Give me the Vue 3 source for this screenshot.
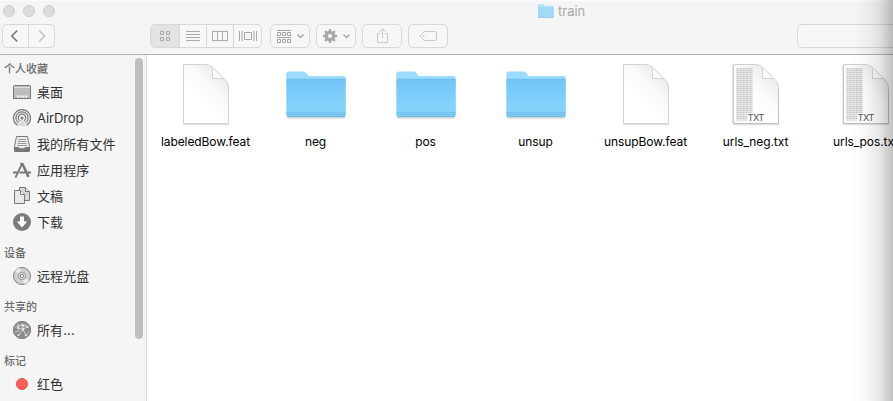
<script setup>
const groups = [
  {
    title: '个人收藏',
    items: [
      { label: '桌面', icon: 'desktop' },
      { label: 'AirDrop', icon: 'airdrop' },
      { label: '我的所有文件', icon: 'all' },
      { label: '应用程序', icon: 'apps' },
      { label: '文稿', icon: 'docs' },
      { label: '下载', icon: 'download' },
    ],
  },
  { title: '设备', items: [{ label: '远程光盘', icon: 'disc' }] },
  { title: '共享的', items: [{ label: '所有...', icon: 'globe' }] },
  { title: '标记', items: [{ label: '红色', icon: 'red' }] },
]

const files = [
  { name: 'labeledBow.feat', kind: 'file' },
  { name: 'neg', kind: 'folder' },
  { name: 'pos', kind: 'folder' },
  { name: 'unsup', kind: 'folder' },
  { name: 'unsupBow.feat', kind: 'file' },
  { name: 'urls_neg.txt', kind: 'txt' },
  { name: 'urls_pos.txt', kind: 'txt' },
]

const textLines = Array.from({ length: 26 }, (_, i) => i)
</script>

<template>
  <div class="window">
    <svg class="defs" width="0" height="0">
      <defs>
        <linearGradient id="folderFront" x1="0" y1="0" x2="0" y2="1">
          <stop offset="0" stop-color="#70c4f6" />
          <stop offset="0.8" stop-color="#86d4fb" />
          <stop offset="1" stop-color="#7acbf4" />
        </linearGradient>
        <linearGradient id="paper" x1="0.75" y1="0.1" x2="0.35" y2="0.6">
          <stop offset="0" stop-color="#ebebeb" />
          <stop offset="0.5" stop-color="#fafafa" />
          <stop offset="1" stop-color="#ffffff" />
        </linearGradient>
        <linearGradient id="curl" x1="0" y1="1" x2="0.6" y2="0.4">
          <stop offset="0" stop-color="#ffffff" />
          <stop offset="1" stop-color="#e2e2e2" />
        </linearGradient>
      </defs>
    </svg>

    <header class="header">
      <div class="titlebar">
        <div class="lights"><i></i><i></i><i></i></div>
        <div class="title">
          <svg width="16" height="15" viewBox="0 0 16 15">
            <path d="M0 13.5V1Q0 .3.7.3H5.6L7 1.8H15.3Q16 1.8 16 2.5V13.5Z" fill="#b4e1f8" />
            <path d="M0 3.3H16V13.3Q16 14 15.3 14H.7Q0 14 0 13.3Z" fill="#a2d9f8" />
            <path d="M.5 13.5H15.5" stroke="#a5cadd" />
          </svg>
          <span>train</span>
        </div>
      </div>
      <div class="toolbar">
        <div class="seg nav">
          <button class="cell">
            <svg width="25" height="22" viewBox="0 0 25 22" fill="none"><path d="M14.300 5.500L8.800 11l5.500 5.500" stroke="#7b7b7b" stroke-width="1.700" /></svg>
          </button>
          <button class="cell">
            <svg width="25" height="22" viewBox="0 0 25 22" fill="none"><path d="M10.200 5.500l5.500 5.500-5.500 5.500" stroke="#c0c0c0" stroke-width="1.500" /></svg>
          </button>
        </div>
        <div class="seg views">
          <button class="cell active">
            <svg width="28" height="22" viewBox="0 0 28 22" fill="none" stroke="#a9a9a9"><path d="M9.500 6.500h3v3h-3zM15.500 6.500h3v3h-3zM9.500 12.500h3v3h-3zM15.500 12.500h3v3h-3z" /></svg>
          </button>
          <button class="cell">
            <svg width="26" height="22" viewBox="0 0 26 22" fill="none" stroke="#a9a9a9"><path d="M6 6.500h14M6 9.500h14M6 12.500h14M6 15.500h14" /></svg>
          </button>
          <button class="cell">
            <svg width="26" height="22" viewBox="0 0 26 22" fill="none" stroke="#a9a9a9"><path d="M5.500 6.500h15v9h-15zM10.500 6.500v9M15.500 6.500v9" /></svg>
          </button>
          <button class="cell">
            <svg width="27" height="22" viewBox="0 0 27 22" fill="none" stroke="#a9a9a9"><path d="M5.500 6v10M22.500 6v10M10.500 7.500h7v7h-7zM9 6.500h-1v9h1M19 6.500h1v9h-1" /></svg>
          </button>
        </div>
        <button class="btn">
          <svg width="38" height="22" viewBox="0 0 38 22" fill="none" stroke="#a3a3a3">
            <path d="M6 5.500h14M6 12.500h14" />
            <path d="M6.500 7.500h3v3h-3zM11.500 7.500h3v3h-3zM16.500 7.500h3v3h-3zM6.500 14.500h3v3h-3zM11.500 14.500h3v3h-3zM16.500 14.500h3v3h-3z" />
            <path d="M26.500 9.500l3 3 3-3" stroke-width="1.500" />
          </svg>
        </button>
        <button class="btn">
          <svg width="38" height="22" viewBox="0 0 38 22" fill="none" stroke="#a8a8a8">
            <circle cx="13" cy="11" r="3.700" stroke-width="3.200" />
            <path d="M13 4v3M13 15v3M6 11h3M17 11h3M8.050 6.050l2.100 2.100M15.850 13.850l2.100 2.100M8.050 15.950l2.100-2.100M15.850 8.150l2.100-2.100" stroke-width="2.400" />
            <path d="M26.500 9.500l3 3 3-3" stroke-width="1.500" />
          </svg>
        </button>
        <button class="btn">
          <svg width="38" height="22" viewBox="0 0 38 22" fill="none" stroke="#c9c9c9">
            <path d="M17 8.500h-2.500v9h10v-9h-2.500M19.500 13V3.800M16.500 6.800l3-3 3 3" />
          </svg>
        </button>
        <button class="btn">
          <svg width="38" height="22" viewBox="0 0 38 22" fill="none" stroke="#c9c9c9">
            <path d="M15.500 6.500H26q1.500 0 1.500 1.500v6q0 1.500-1.500 1.500H15.500L11.500 12v-2z" /><circle cx="14.700" cy="11" r=".6" />
          </svg>
        </button>
        <div class="search"></div>
      </div>
    </header>

    <div class="body">
      <aside class="sidebar">
        <nav class="list">
          <section v-for="g in groups" :key="g.title" class="group">
            <h2>{{ g.title }}</h2>
            <div v-for="it in g.items" :key="it.label" class="item">
              <svg width="20" height="20" viewBox="0 0 20 20" fill="none">
                <g v-if="it.icon === 'desktop'">
                  <rect x="1.500" y="3.500" width="17" height="13" rx="1" fill="#bdbdbd" stroke="#777" />
                  <path d="M2 5.500h16" stroke="#ddd" />
                  <path d="M5 14.500h10" stroke="#f5f5f5" stroke-width="2" stroke-dasharray="2 .7" />
                  <path d="M1 16.500h18" stroke="#777" />
                </g>
                <g v-else-if="it.icon === 'airdrop'" stroke="#7b7b7b" stroke-width="1.200">
                  <path d="M5.500 17.300a8.500 8.500 0 1 1 9 0" />
                  <path d="M6.600 15a6.100 6.100 0 1 1 6.800 0" />
                  <path d="M7.900 12.900a3.700 3.700 0 1 1 4.200 0" />
                  <circle cx="10" cy="10" r="1.500" fill="#7b7b7b" stroke="none" />
                  <path d="M10 11l-4 7h8z" fill="#999" stroke="none" opacity=".3" />
                </g>
                <g v-else-if="it.icon === 'all'">
                  <path d="M4.500 2.500h11l2 10v4q0 1-1 1h-13q-1 0-1-1v-4z" fill="#eee" stroke="#777" />
                  <path d="M2.500 13.500h4q1 1.500 3.500 1.500t3.500-1.500h4v3q0 1-1 1h-13q-1 0-1-1z" fill="#777" stroke="#777" />
                  <path d="M6 5.500h8M5.500 7.500h9M5.500 9.500h9M5 11.500h10" stroke="#999" />
                </g>
                <g v-else-if="it.icon === 'apps'" stroke="#777">
                  <path d="M10.500 4L16.500 17" stroke-width="2.600" />
                  <path d="M9.900 4L3.500 17.500" stroke-width="1.800" />
                  <path d="M1 12.500h4M7.500 12.500h5.500M15.500 12.500H19" stroke-width="2" />
                  <path d="M8.300 3.300l3.200.7" stroke-width="1.600" />
                </g>
                <g v-else-if="it.icon === 'docs'" stroke="#777">
                  <path d="M7.500 1.500h6l4 4v9h-10z" fill="#d7d7d7" />
                  <path d="M13.500 1.500v4h4" fill="#eee" />
                  <path d="M2.500 4.500h6l4 4v9h-10z" fill="#e9e9e9" />
                  <path d="M8.500 4.500v4h4" fill="#fafafa" />
                </g>
                <g v-else-if="it.icon === 'download'">
                  <circle cx="10" cy="10" r="9" fill="#7b7b7b" />
                  <path d="M8 4.500h4v5h3.200L10 15.500 4.800 9.500H8z" fill="#fff" />
                </g>
                <g v-else-if="it.icon === 'disc'">
                  <circle cx="10" cy="10" r="8.500" fill="#d1d1d1" stroke="#808080" />
                  <path d="M10 10L3 5a8 8 0 0 1 5-3zM10 10l7 5a8 8 0 0 1-5 3z" fill="#ececec" />
                  <circle cx="10" cy="10" r="3.800" fill="#ddd" stroke="#999" />
                  <circle cx="10" cy="10" r="1.700" fill="#f5f5f5" stroke="#888" />
                </g>
                <g v-else-if="it.icon === 'globe'">
                  <circle cx="10" cy="10" r="9" fill="#8d8d8d" />
                  <g stroke="#d5d5d5" stroke-width=".8">
                    <path d="M3 7q7-3 14 0M5 4.500q5 2 10 0M10 3l1 6 3 7M11 9l-5 7M6 8l5 1 5-2M3 12l4-1-1-7M14 16l3-5" />
                  </g>
                  <g fill="#f0f0f0"><circle cx="11" cy="5.500" r="1.200" /><circle cx="11" cy="9.500" r="1.200" /><circle cx="15.500" cy="7" r=".9" /><circle cx="6" cy="8" r="1" /><circle cx="13.800" cy="15.500" r="1" /><circle cx="6.500" cy="15" r=".9" /></g>
                  <circle cx="10" cy="10" r="8.500" stroke="#808080" />
                </g>
                <circle v-else cx="10" cy="10" r="5.600" fill="#fc605c" stroke="#ee5350" stroke-width=".9" />
              </svg>
              <span>{{ it.label }}</span>
            </div>
          </section>
        </nav>
        <div class="scroll"></div>
      </aside>

      <main class="files">
        <figure v-for="f in files" :key="f.name" class="file">
          <svg width="64" height="64" viewBox="0 0 64 64" fill="none">
            <g v-if="f.kind === 'folder'">
              <path d="M3 54.800h58" stroke="#000" stroke-opacity=".16" stroke-width="1.600" />
              <path d="M2.300 20V11q0-2.500 2.500-2.500H19.500q1.500 0 2.500 1.300l1.500 2q.8 1.200 2 1.200H59.500q2.300 0 2.300 2.300V20z" fill="#9bdbfd" />
              <path d="M2.300 17q0-1 1-1H60.800q1 0 1 1V52q0 2-2 2H4.300q-2 0-2-2z" fill="url(#folderFront)" />
              <path d="M3 16.200h58" stroke="#6dbde9" stroke-width=".7" />
              <path d="M2.300 49.500h59.500M2.300 51.500h59.500" stroke="#6ebce5" stroke-width=".7" />
              <path d="M3.500 53.600h57" stroke="#6dadcf" stroke-width=".8" />
            </g>
            <g v-else>
              <path d="M9.300 61.600h46" stroke="#000" stroke-opacity=".12" stroke-width="1.500" />
              <path d="M9.500 1.500H30C36 1.500 38.500 4 42.500 8L48.500 14C53 18.500 54.500 20.500 54.500 26V60.500H9.500z" fill="url(#paper)" stroke="#d2d2d2" />
              <path d="M34 1.900Q38.500 4 38.500 10V15.500H43Q50 15.500 53.500 21Q52.300 18 48.500 14L42.500 8Q38.500 4 34 1.900z" fill="url(#curl)" />
              <path d="M38.500 5.500V15.500H49" stroke="#cfcfcf" stroke-width=".9" />
              <path d="M39 6L48.500 15H39z" fill="#fafafa" />
              <g v-if="f.kind === 'txt'">
                <rect x="12.500" y="5" width="16" height="53" fill="#e2e2e2" />
                <path v-for="n in textLines" :key="n" :d="`M12.500 ${5.500 + n * 2}H28.500`" stroke="#c2c2c2" stroke-width=".8" :stroke-dasharray="n % 5 === 3 ? '1 1' : '2.500 .6'" />
                <path d="M15 5v53M18 5v53M21 5v53M25 5v53" stroke="#f0f0f0" stroke-width=".5" />
                <rect x="23" y="50" width="20" height="8.500" fill="#fff" fill-opacity=".85" />
                <text x="23.500" y="57.500" class="badge" textLength="17">TXT</text>
                <path d="M9 2V60.500H54.500V26" stroke="#bdbdbd" stroke-width=".8" />
              </g>
            </g>
          </svg>
          <figcaption>{{ f.name }}</figcaption>
        </figure>
      </main>
    </div>
    <div class="edge-shadow"></div>
  </div>
</template>

<style>
html, body { margin: 0; overflow: hidden; }
</style>

<style scoped>
.window {
  position: relative;
  display: flex;
  flex-direction: column;
  width: 893px;
  height: 401px;
  overflow: hidden;
  background: #fff;
  font-family: Inter, "Noto Sans CJK SC", sans-serif;
}
.defs { position: absolute; }
svg { display: block; flex: none; }
.header {
  flex: none;
  height: 55px;
  box-sizing: border-box;
  background: #f5f5f5;
  border-top: 1px solid #fbfbfb;
  border-bottom: 1px solid #b1b1b1;
}
.titlebar { display: flex; height: 23px; }
.lights { display: flex; gap: 8px; padding: 4px 0 0 3px; }
.lights i {
  width: 12px;
  height: 12px;
  box-sizing: border-box;
  border-radius: 50%;
  background: #dcdcdc;
  border: 1px solid #cdcdcd;
}
.title {
  display: flex;
  gap: 4px;
  margin-left: 483px;
  padding-top: 3px;
  font-size: 13px;
  line-height: 15px;
  color: #a8a8a8;
}
.toolbar { display: flex; height: 24px; padding-left: 2px; }
button { all: unset; box-sizing: border-box; flex: none; }
.seg, .btn, .search {
  flex: none;
  box-sizing: border-box;
  height: 24px;
  border: 1px solid #d8d8d8;
  border-radius: 5px;
  background: #f7f7f7;
}
.seg { display: flex; overflow: hidden; }
.cell + .cell { border-left: 1px solid #d8d8d8; }
.active { background: #e3e3e3; }
.views { margin-left: 95px; margin-right: 8px; }
.btn { width: 40px; margin-right: 6px; }
.search { width: 120px; margin-left: 343px; }
.body { display: flex; flex: 1; min-height: 0; }
.sidebar {
  display: flex;
  flex: none;
  width: 147px;
  box-sizing: border-box;
  background: #f5f5f5;
  border-right: 1px solid #dadada;
}
.list { width: 135px; }
h2 {
  margin: 0;
  padding: 8px 0 0 4px;
  font-size: 11px;
  font-weight: 500;
  line-height: 20px;
  color: #6a6a6a;
}
.group:first-child h2 { padding-top: 4px; }
.item {
  display: flex;
  align-items: center;
  gap: 5px;
  height: 26px;
  padding-left: 12px;
  font-size: 13px;
  line-height: 26px;
  letter-spacing: 0.1px;
  color: #303030;
  white-space: nowrap;
}
.item:nth-child(3) { letter-spacing: -0.1px; }
.scroll {
  width: 8px;
  height: 281px;
  margin-top: 3px;
  border-radius: 4px;
  background: #bebebe;
}
.files { display: flex; flex: 1; min-width: 0; padding: 8px 0 0 4px; overflow: hidden; }
.file {
  display: flex;
  flex: none;
  flex-direction: column;
  align-items: center;
  width: 110px;
  margin: 0;
}
figcaption {
  margin-top: 7px;
  margin-left: -1px;
  font-size: 12px;
  line-height: 16px;
  letter-spacing: -0.08px;
  color: #000;
  white-space: nowrap;
}
.badge { font-size: 9.5px; fill: #555; }
.edge-shadow {
  position: absolute;
  inset: 0 0 0 auto;
  width: 42px;
  background: linear-gradient(to right, rgba(0, 0, 0, 0), rgba(0, 0, 0, 0.03) 40%, rgba(0, 0, 0, 0.1) 70%, rgba(0, 0, 0, 0.25));
}
</style>
